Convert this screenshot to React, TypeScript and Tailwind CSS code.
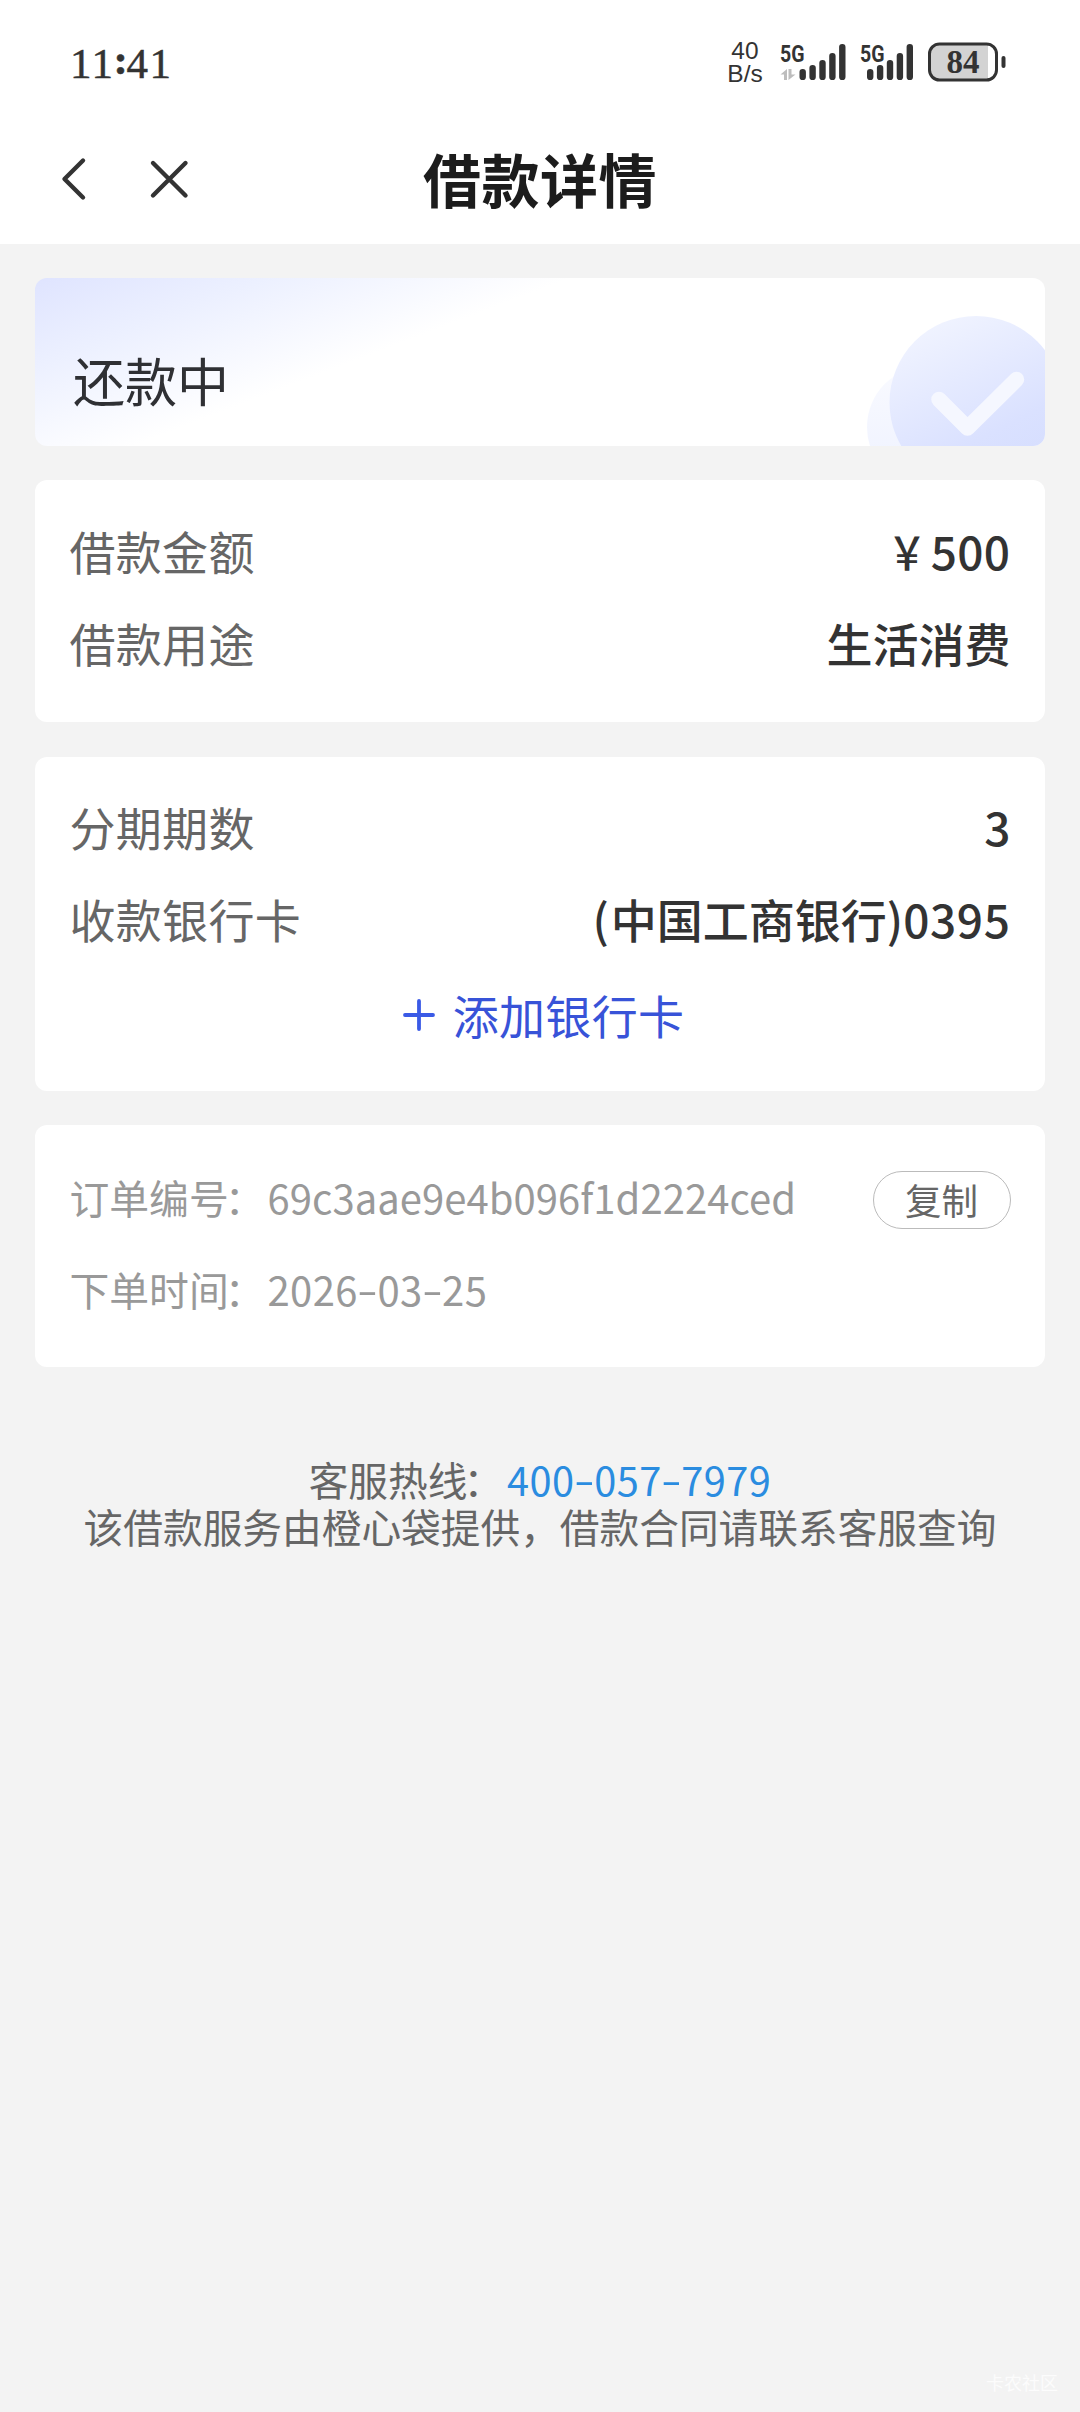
import { Fragment, type ReactNode } from "react";

const BARS = [11, 15, 20, 27, 36];

function Signal({ arrows }: { arrows?: boolean }) {
  const start = arrows ? 19.5 : 7;
  return (
    <svg width="68" height="50" viewBox="0 -10 68 50" className="-mt-[10px] block">
      <text
        x="0"
        y="19.500"
        fontSize="24"
        fontWeight="700"
        fill="#333"
        textLength="24.500"
        lengthAdjust="spacingAndGlyphs"
        fontFamily="Roboto, 'Liberation Sans', sans-serif"
      >
        5G
      </text>
      {arrows && <path d="M7 27V38H4V32.500H0.500ZM8.500 27H11.500V32.500H15.500L8.500 38Z" fill="#bdbdbd" />}
      {BARS.map((h, i) => (
        <rect key={h} x={start + i * 9.9} y={38 - h} width="6.400" height={h} rx="3.100" fill="#333" />
      ))}
    </svg>
  );
}

function StatusBar() {
  return (
    <div className="flex h-[124px] items-start justify-between pl-[70px] pr-[74px] text-[#333]">
      <div
        className="mt-[40px] flex text-[43px] leading-[48px] tracking-[1.5px]"
        style={{ WebkitTextStroke: "0.5px #333", fontFamily: "'Liberation Serif', serif" }}
      >
        11<span className="-mt-[4px] w-[12px] -translate-x-px font-bold">:</span>41
      </div>
      <div className="mt-[42px] flex">
        <div className="mr-[17px] w-[36px] text-center font-['Liberation_Sans',sans-serif] text-[24.5px] leading-[22px]">
          <div className="-mt-[2px]">40</div>
          <div className="mt-px">B/s</div>
        </div>
        <Signal arrows />
        <div className="w-[12px]" />
        <Signal />
        <svg width="78" height="40" viewBox="0 0 78 40" className="block">
          <rect x="1.500" y="2" width="58" height="36" rx="9" fill="#d3d3d3" />
          <path d="M60 2H50V38H60Z" fill="#d3d3d3" />
          <rect x="1.500" y="2" width="67" height="36" rx="10" fill="none" stroke="#333" strokeWidth="3" />
          <rect x="73.500" y="14" width="4" height="12" rx="2" fill="#333" />
          <text
            x="35"
            y="31"
            textAnchor="middle"
            fontSize="33"
            fontWeight="700"
            fill="#333"
            fontFamily="'Liberation Serif', serif"
          >
            84
          </text>
        </svg>
      </div>
    </div>
  );
}

function NavBar() {
  return (
    <div className="grid h-[120px] grid-cols-[1fr_auto_1fr] items-start">
      <div className="flex pl-[60px] pt-[32px]">
        <svg width="28" height="46" viewBox="0 0 28 46" fill="none" stroke="#333" strokeWidth="4.400" strokeLinecap="round" strokeLinejoin="round">
          <path d="M23 4.500L4.500 23L23 41.500" />
        </svg>
        <svg width="42" height="46" viewBox="0 0 42 46" fill="none" stroke="#333" strokeWidth="4.400" strokeLinecap="round" className="ml-[60px]">
          <path d="M5 7L37.500 39.500M37.500 7L5 39.500" />
        </svg>
      </div>
      <h1 className="mt-[12px] font-[KaiTi,STKaiti,'Noto_Sans_CJK_SC',sans-serif] text-[58px] font-bold leading-[84px] tracking-[0.5px] text-[#1c1c1c]">
        借款详情
      </h1>
      <div />
    </div>
  );
}

function Card({ className, children }: { className: string; children: ReactNode }) {
  return <section className={`rounded-[12px] bg-white px-[34.5px] ${className}`}>{children}</section>;
}

function Row({ label, children }: { label: string; children: ReactNode }) {
  return (
    <div className="flex h-[92px] items-center justify-between text-[46px] leading-[60px]">
      <span className="tracking-[0.3px] text-[#666]">{label}</span>
      <span className="flex items-center font-medium text-[#333]">{children}</span>
    </div>
  );
}

/** Digits joined by wide hyphens. */
function Dashed({ value }: { value: string }) {
  return (
    <>
      {value.split("-").map((part, i) => (
        <Fragment key={i}>
          {i > 0 && <span className="inline-block w-[19.5px] -translate-y-px scale-x-[1.5] text-center">-</span>}
          {part}
        </Fragment>
      ))}
    </>
  );
}

function Colon() {
  return <span className="inline-block -translate-x-[4px]">：</span>;
}

function Banner() {
  return (
    <section className="flex h-[167.5px] justify-between overflow-hidden rounded-[12px] bg-white bg-[linear-gradient(159deg,#dfe4ff_0%,#ecf0ff_16%,#ffffff_37%)]">
      <h2 className="ml-[38px] mt-[66px] text-[52px] leading-[72px] text-[#2f3034]">还款中</h2>
      <svg width="180" height="168" viewBox="0 0 180 168">
        <defs>
          <linearGradient id="disc" x1="0.250" y1="0" x2="0.700" y2="0.900">
            <stop offset="0" stopColor="#f1f4ff" />
            <stop offset="0.750" stopColor="#dae1ff" />
            <stop offset="1" stopColor="#d6defe" />
          </linearGradient>
          <linearGradient id="halo" x1="0" y1="0" x2="0" y2="1">
            <stop offset="0" stopColor="#f9faff" />
            <stop offset="0.700" stopColor="#f1f4ff" />
          </linearGradient>
        </defs>
        <circle cx="63" cy="149" r="61" fill="url(#halo)" />
        <circle cx="111" cy="124.500" r="86.500" fill="url(#disc)" />
        <path d="M74 121.500L102.500 150L151.500 101.500" fill="none" stroke="#f5f7ff" strokeWidth="15.500" strokeLinecap="round" strokeLinejoin="round" />
      </svg>
    </section>
  );
}

export default function App() {
  return (
    <main className="flex h-[2412px] w-[1080px] flex-col overflow-hidden bg-[#f3f3f3] font-['Noto_Sans_CJK_SC',sans-serif]">
      <header className="h-[244px] shrink-0 bg-white">
        <StatusBar />
        <NavBar />
      </header>

      <div className="flex flex-col gap-[34.5px] px-[35px] pt-[34px]">
        <Banner />

        <Card className="h-[242px] pt-[23.5px]">
          <Row label="借款金额">
            <span className="mr-[-2px] -translate-x-[3px] scale-x-[0.85]">￥</span>
            <span className="tracking-[0.4px]">500</span>
          </Row>
          <Row label="借款用途">生活消费</Row>
        </Card>

        <Card className="h-[334px] pt-[23px]">
          <Row label="分期期数">3</Row>
          <Row label="收款银行卡">
            <span className="mr-[2px]">(</span>中国工商银行)<span className="tracking-[0.6px]">0395</span>
          </Row>
          <button className="flex h-[100px] w-full items-center justify-center gap-[18px] pl-[7px] text-[46px] leading-[60px] tracking-[0.3px] text-[#3853d8]">
            <svg width="32" height="32" viewBox="0 0 32 32" stroke="#3a5ae6" strokeWidth="3.800" strokeLinecap="round" className="mt-[3px]">
              <path d="M2 16H30M16 2V30" />
            </svg>
            添加银行卡
          </button>
        </Card>

        <Card className="h-[242px] pt-[26px] text-[40px] leading-[60px] text-[#999]">
          <div className="flex h-[92px] items-center">
            <span className="w-[198px] whitespace-nowrap text-[39.8px]">
              订单编号
              <Colon />
            </span>
            <span className="tracking-[0.05px]">69c3aae9e4b096f1d2224ced</span>
            <button className="ml-auto mt-[6px] flex h-[58px] w-[138px] items-center justify-center rounded-full border border-[#bbb] text-[36.5px] leading-[50px] text-[#666]">
              复制
            </button>
          </div>
          <div className="flex h-[92px] items-center">
            <span className="w-[198px] whitespace-nowrap text-[39.8px]">
              下单时间
              <Colon />
            </span>
            <span className="tracking-[0.4px]">
              <Dashed value="2026-03-25" />
            </span>
          </div>
        </Card>
      </div>

      <footer className="mt-[88px] text-center text-[39.7px] leading-[47px] text-[#666]">
        <p>
          客服热线
          <Colon />
          <a className="tracking-[0.5px] text-[#2a8ce0]">
            <Dashed value="400-057-7979" />
          </a>
        </p>
        <p>该借款服务由橙心袋提供，借款合同请联系客服查询</p>
      </footer>

      <div className="mr-[22px] mt-auto self-end pb-[17px] text-[18px] leading-[26px] text-[#fcfcfc]">卡农社区</div>
    </main>
  );
}
